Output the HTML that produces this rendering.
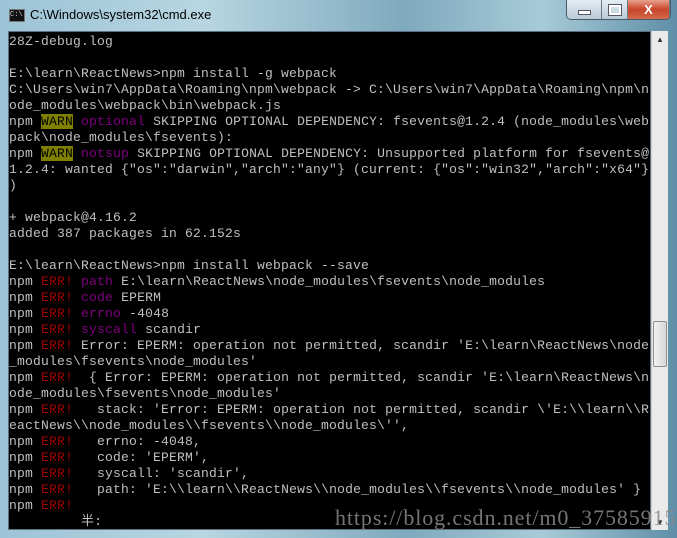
<!DOCTYPE html>
<html><head><meta charset="utf-8"><style>
body{margin:0;width:677px;height:538px;overflow:hidden;background:#6f9db5;position:relative;font-family:"Liberation Sans",sans-serif}
.frame{position:absolute;left:0;top:0;width:677px;height:538px;background:linear-gradient(90deg,#9cc3d6 0%,#b8d6e2 30%,#7fa9bd 60%,#a8cbd9 80%,#5f8ea6 100%)}
.title{position:absolute;left:30px;top:7px;font-size:13px;color:#000}
.ico{position:absolute;left:9px;top:9px;width:14px;height:11px;background:#111;border:1px solid #777;color:#ccc;font-size:7px;line-height:11px;font-family:"Liberation Mono",monospace}
.btns{position:absolute;top:0;left:566px;height:19px;border:1px solid #4a5b6a;border-top:none;border-radius:0 0 5px 5px;overflow:hidden;display:flex}
.b{height:19px;background:linear-gradient(#e4edf3,#b9cad6);border-right:1px solid #6a7b8a;position:relative}
.bc{width:41px;background:linear-gradient(#e8a08c,#c9452a 50%,#d46a4c);color:#fff;font-weight:bold;text-align:center;font-size:13px;line-height:19px}
.term{position:absolute;left:8px;top:31px;width:643px;height:499px;background:#000;border:1px solid #5a7080;box-sizing:border-box}
.sb{position:absolute;left:651px;top:31px;width:17px;height:499px;background:#eaeaea;border-left:1px solid #ccc;box-sizing:border-box}
.thumb{position:absolute;left:1px;top:290px;width:14px;height:46px;background:linear-gradient(90deg,#f2f2f2,#d6d6d6);border:1px solid #8f8f8f;border-radius:2px;box-sizing:border-box}
pre{position:absolute;left:9px;top:34px;margin:0;font-family:"Liberation Mono","WenQuanYi Zen Hei",monospace;font-size:13px;letter-spacing:0.2px;line-height:16px;color:#c0c0c0}
.w{background:#808000;color:#000}.p{color:#800080}.r{color:#a00000}
.wm{position:absolute;left:335px;top:505px;font-family:"Liberation Serif",serif;font-size:22px;letter-spacing:0.9px;color:#8a8a8a;opacity:.85}
</style></head><body>
<div class="frame"></div>
<div class="ico">C:\</div>
<div class="title">C:\Windows\system32\cmd.exe</div>
<div class="btns"><div class="b" style="width:34px"><div style="position:absolute;left:11px;top:10px;width:11px;height:3px;background:#fff;border:1px solid #556"></div></div><div class="b" style="width:25px"><div style="position:absolute;left:7px;top:5px;width:8px;height:6px;border:2px solid #fff;outline:1px solid #556"></div></div><div class="b bc">X</div></div>
<div class="term"></div>
<div class="sb"><div style="text-align:center;font-size:8px;color:#333;margin-top:4px">▲</div><div class="thumb"></div><div style="position:absolute;bottom:3px;width:16px;text-align:center;font-size:8px;color:#333">▼</div></div>
<pre>28Z-debug.log

E:\learn\ReactNews>npm install -g webpack
C:\Users\win7\AppData\Roaming\npm\webpack -> C:\Users\win7\AppData\Roaming\npm\n
ode_modules\webpack\bin\webpack.js
npm <span class="w">WARN</span> <span class="p">optional</span> SKIPPING OPTIONAL DEPENDENCY: fsevents@1.2.4 (node_modules\web
pack\node_modules\fsevents):
npm <span class="w">WARN</span> <span class="p">notsup</span> SKIPPING OPTIONAL DEPENDENCY: Unsupported platform for fsevents@
1.2.4: wanted {"os":"darwin","arch":"any"} (current: {"os":"win32","arch":"x64"}
)

+ webpack@4.16.2
added 387 packages in 62.152s

E:\learn\ReactNews>npm install webpack --save
npm <span class="r">ERR!</span> <span class="p">path</span> E:\learn\ReactNews\node_modules\fsevents\node_modules
npm <span class="r">ERR!</span> <span class="p">code</span> EPERM
npm <span class="r">ERR!</span> <span class="p">errno</span> -4048
npm <span class="r">ERR!</span> <span class="p">syscall</span> scandir
npm <span class="r">ERR!</span> Error: EPERM: operation not permitted, scandir 'E:\learn\ReactNews\node
_modules\fsevents\node_modules'
npm <span class="r">ERR!</span>  { Error: EPERM: operation not permitted, scandir 'E:\learn\ReactNews\n
ode_modules\fsevents\node_modules'
npm <span class="r">ERR!</span>   stack: 'Error: EPERM: operation not permitted, scandir \'E:\\learn\\R
eactNews\\node_modules\\fsevents\\node_modules\'',
npm <span class="r">ERR!</span>   errno: -4048,
npm <span class="r">ERR!</span>   code: 'EPERM',
npm <span class="r">ERR!</span>   syscall: 'scandir',
npm <span class="r">ERR!</span>   path: 'E:\\learn\\ReactNews\\node_modules\\fsevents\\node_modules' }
npm <span class="r">ERR!</span>
         半:</pre>
<div class="wm">https://blog.csdn.net/m0_37585915</div>
</body></html>
